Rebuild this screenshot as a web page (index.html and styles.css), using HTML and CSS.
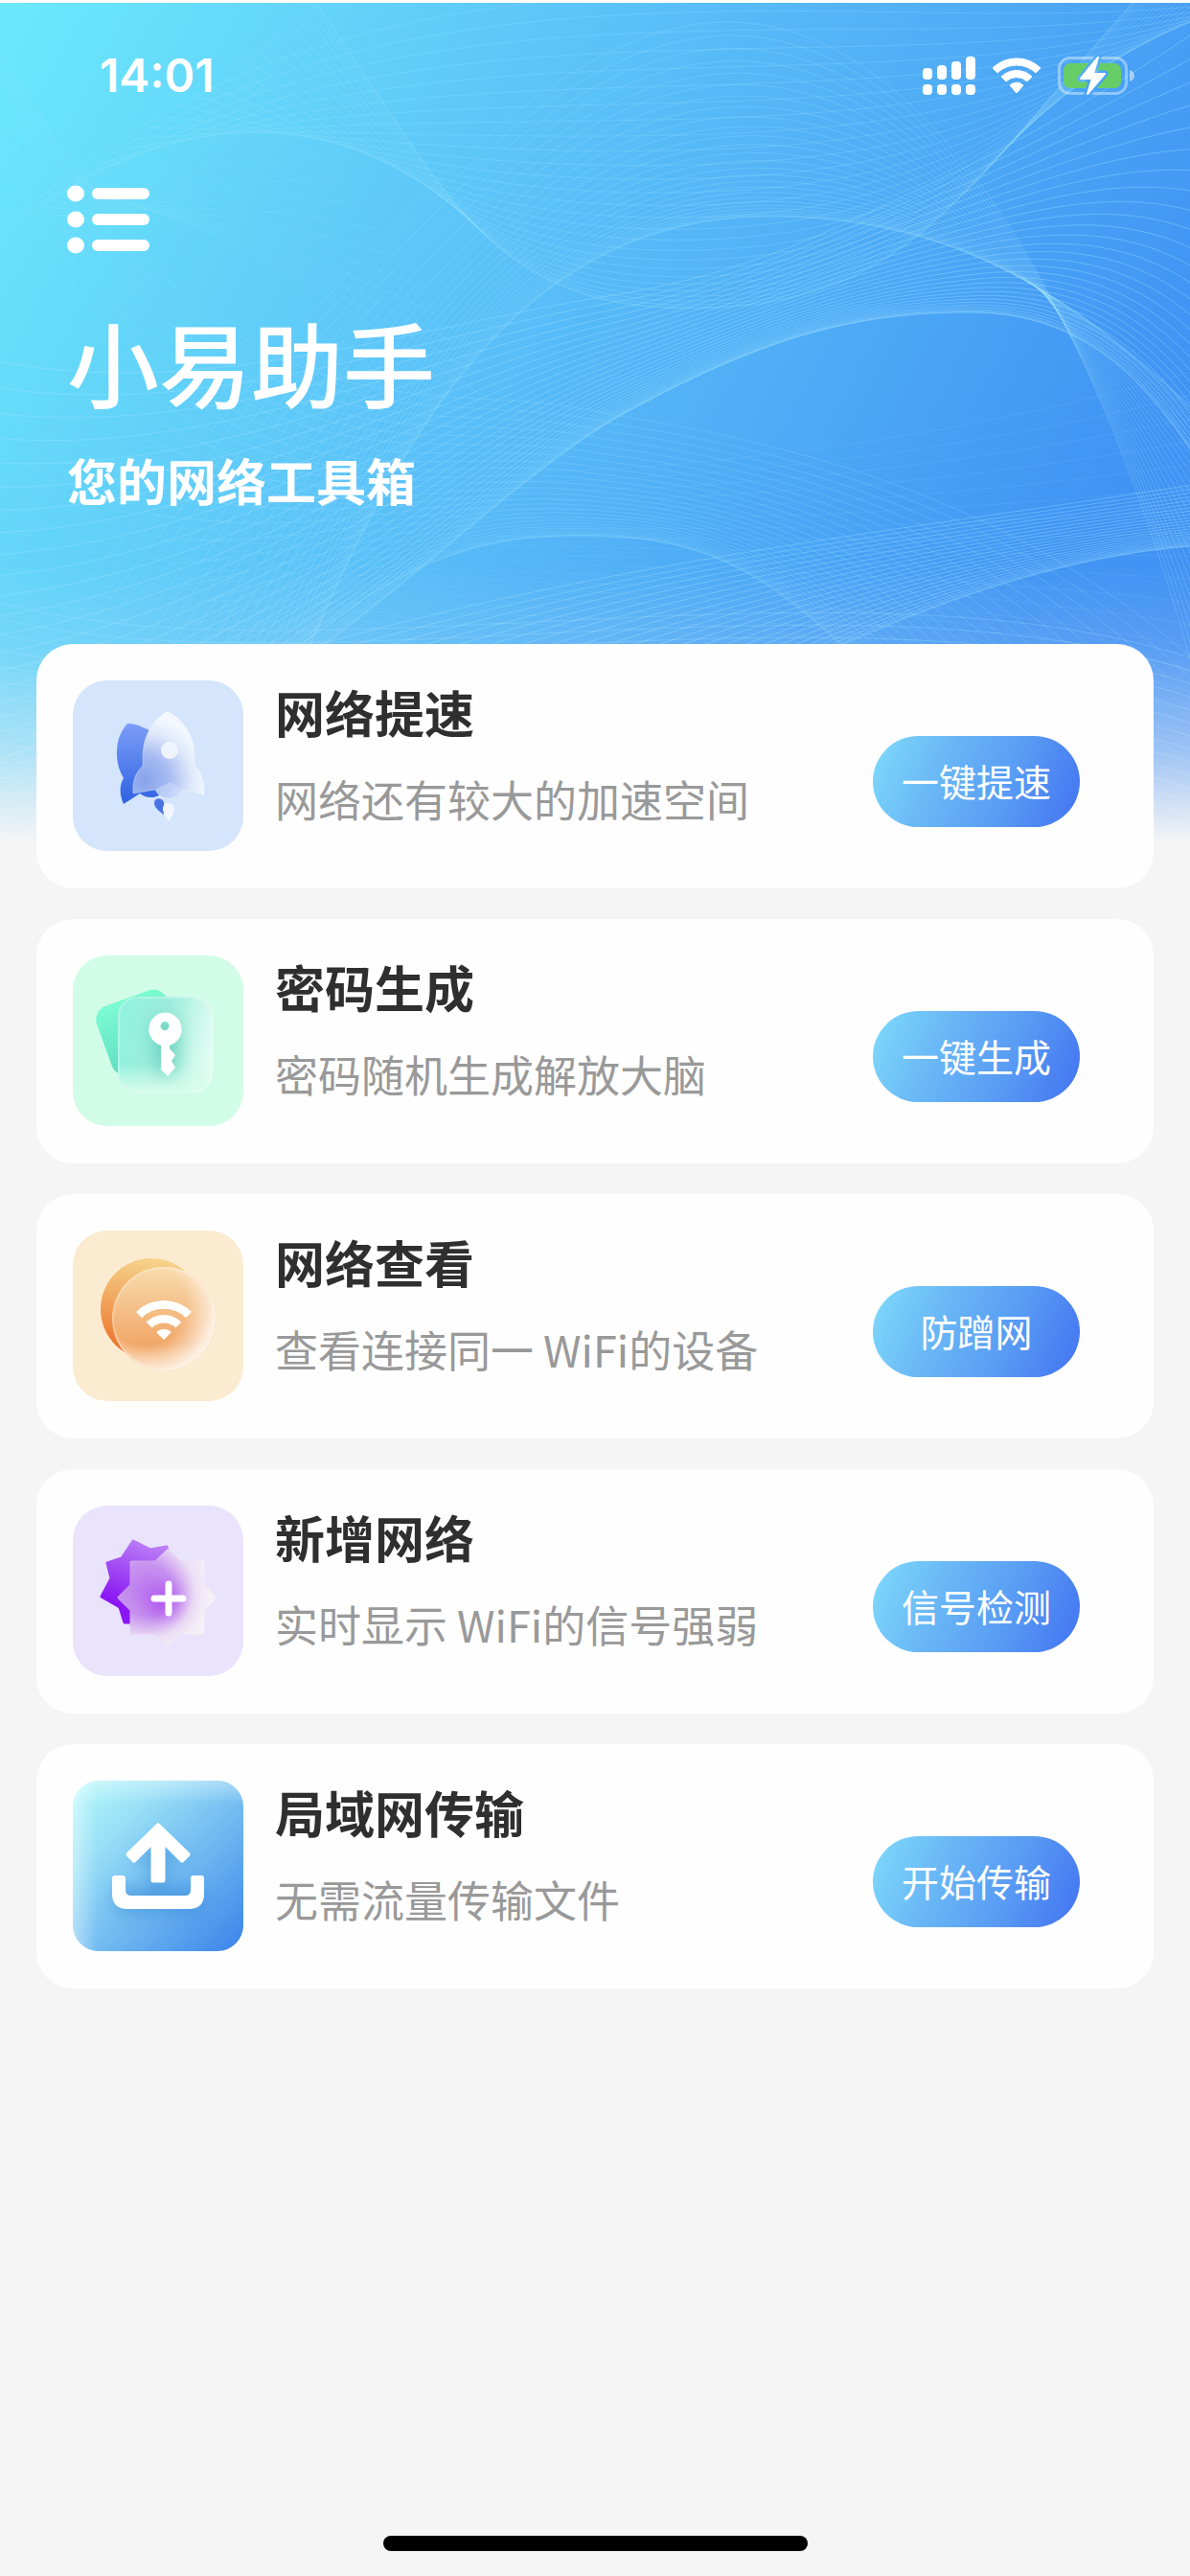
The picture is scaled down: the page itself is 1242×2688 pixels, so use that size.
FILE: index.html
```html
<!DOCTYPE html>
<html lang="zh-CN">
<head>
<meta charset="utf-8">
<meta name="viewport" content="width=device-width, initial-scale=1">
<title>小易助手</title>
<link rel="stylesheet" href="styles.css">
</head>
<body>
<svg class="defs" width="0" height="0" aria-hidden="true">
  <symbol id="wifi" viewBox="66 73 58 41">
    <path d="M66 85a41 41 0 0 1 58 0l-6 6a33 33 0 0 0-46 0zM76.600 95.600a26 26 0 0 1 36.800 0l-6 6a17.500 17.500 0 0 0-24.800 0zM87.200 106.200a11 11 0 0 1 15.600 0L95 114z" fill="#fff"/>
  </symbol>
</svg>
<div class="page">
  <div class="backdrop" aria-hidden="true">
    <svg id="waves" class="waves" viewBox="0 0 1242 885" preserveAspectRatio="none"></svg>
  </div>

  <header class="hero">
    <div class="status">
      <time class="clock">14:01</time>
      <div class="status-icons">
        <svg width="55" height="40" viewBox="0 0 55 40" fill="#fff" aria-hidden="true">
          <rect x="0" y="12" width="10" height="12" rx="4"/><rect x="15" y="9" width="10" height="15" rx="4"/><rect x="30" y="5" width="10" height="19" rx="4"/><rect x="45" y="0" width="10" height="24" rx="4"/>
          <rect x="0" y="29" width="10" height="11" rx="4"/><rect x="15" y="29" width="10" height="11" rx="4"/><rect x="30" y="29" width="10" height="11" rx="4"/><rect x="45" y="29" width="10" height="11" rx="4"/>
        </svg>
        <svg width="52" height="38" viewBox="0 0 52 38" fill="#fff" stroke="#fff" stroke-width="1" stroke-linejoin="round" aria-hidden="true">
          <path d="M1 11a36 36 0 0 1 50 0l-5 5a29 29 0 0 0-40 0zM10 20a23 23 0 0 1 32 0l-5 5a16 16 0 0 0-22 0zM19 29a10 10 0 0 1 14 0l-7 8z"/>
        </svg>
        <svg width="80" height="40" viewBox="0 0 80 40" aria-hidden="true">
          <mask id="bolt-gap"><rect width="80" height="40" fill="#fff"/><path d="M42 1L24 23h12l-5 16L49 18H37z" fill="#000" stroke="#000" stroke-width="7" stroke-linejoin="round"/></mask>
          <g mask="url(#bolt-gap)">
            <rect x="1.500" y="1.500" width="70" height="37" rx="11" fill="none" stroke="#fff" stroke-opacity=".4" stroke-width="3"/>
            <rect x="6" y="7" width="60" height="26" rx="7" fill="#67ce67"/>
          </g>
          <path d="M75 14q5 2 5 6t-5 6z" fill="#fff" fill-opacity=".5"/>
          <path d="M42 1L24 23h12l-5 16L49 18H37z" fill="#fff" stroke="#fff" stroke-width="2" stroke-linejoin="round"/>
        </svg>
      </div>
    </div>
    <div class="intro">
      <button class="menu" type="button" aria-label="菜单">
        <svg width="86" height="72" viewBox="0 0 86 72" fill="#fff" aria-hidden="true">
          <ellipse cx="9" cy="9" rx="9" ry="8.500"/><ellipse cx="9" cy="36" rx="9" ry="8.500"/><ellipse cx="9" cy="63" rx="9" ry="8.500"/>
          <rect x="26" y="3" width="60" height="12" rx="6"/><rect x="26" y="30" width="60" height="12" rx="6"/><rect x="26" y="57" width="60" height="12" rx="6"/>
        </svg>
      </button>
      <h1>小易助手</h1>
      <p class="tagline">您的网络工具箱</p>
    </div>
  </header>

  <main class="cards">
    <section class="card">
      <svg class="icon" viewBox="0 0 178 178" aria-hidden="true">
        <defs>
          <linearGradient id="r1" x1="0" y1="0" x2="0" y2="1"><stop offset="0" stop-color="#7c9df7"/><stop offset="1" stop-color="#2f62e2"/></linearGradient>
          <radialGradient id="r2" gradientUnits="userSpaceOnUse" cx="74" cy="104" r="66"><stop offset="0" stop-color="#88a3ec"/><stop offset=".4" stop-color="#a6bbf1"/><stop offset=".75" stop-color="#dfe8fb"/><stop offset="1" stop-color="#f3f8fe"/></radialGradient>
        </defs>
        <rect width="178" height="178" rx="36" fill="#d4e5fc"/>
        <path d="M57 45C49 54 46 64 46 76c0 11 3 19 7 26-4 6-5 16 0 27l17-11c6 5 14 5 20 2V60c-4-6-12-9-17-11-5-3-11-4-16-4z" fill="url(#r1)"/>
        <path d="M99 32C86 40 73 55 73 80v9c-7 7-11 15-10 29l23-4c3 6 8 9 14 9s12-3 15-9l22 5c0-15-3-23-10-30v-9C127 55 113 40 99 32z" fill="url(#r2)" stroke="#fff" stroke-opacity=".3"/>
        <path d="M86 114c3 6 8 9 14 9s12-3 15-9l-14-8z" fill="#d4e5fc" fill-opacity=".45"/>
        <circle cx="101" cy="73" r="9" fill="#f0f4fd"/>
        <path d="M95 140c-6-4-10-8-10-12 0-6 8-6 10-1z" fill="#4a73e4"/>
        <path d="M100 147c-3-5-6-9-6-13 0-8 12-8 12 0 0 5-3 9-6 13z" fill="#f0f5fe"/>
      </svg>
      <div class="info"><h2>网络提速</h2><p>网络还有较大的加速空间</p></div>
      <button class="action" type="button">一键提速</button>
    </section>

    <section class="card">
      <svg class="icon" viewBox="0 0 178 178" aria-hidden="true">
        <defs>
          <linearGradient id="k1" x1="0" y1="0" x2="0" y2="1"><stop offset="0" stop-color="#7dfbd2"/><stop offset="1" stop-color="#5fdcc0"/></linearGradient>
          <linearGradient id="k2" x1="0" y1=".4" x2="1" y2=".6"><stop offset="0" stop-color="#93f3de"/><stop offset=".45" stop-color="#9cebdc"/><stop offset=".75" stop-color="#c5f7e8"/><stop offset="1" stop-color="#e3fdf3"/></linearGradient>
          <linearGradient id="k3" x1="0" y1="0" x2="0" y2="1"><stop offset=".7" stop-color="#d6fcec" stop-opacity="0"/><stop offset=".95" stop-color="#d6fcec" stop-opacity=".9"/></linearGradient>
          <filter id="soft" x="-50%" y="-50%" width="200%" height="200%"><feGaussianBlur stdDeviation="9"/></filter>
        </defs>
        <rect width="178" height="178" rx="36" fill="#d1fde8"/>
        <rect width="78" height="76" rx="15" transform="translate(20 58) rotate(-20)" fill="url(#k1)"/>
        <rect x="47" y="43" width="99" height="100" rx="20" fill="url(#k2)"/>
        <rect x="47" y="43" width="99" height="100" rx="20" fill="url(#k3)"/>
        <path d="M82 68h28v46l-10 16-12-16z" fill="#4fc4b0" opacity=".65" filter="url(#soft)"/>
        <rect x="48" y="44" width="97" height="98" rx="19" fill="none" stroke="#fff" stroke-opacity=".25" stroke-width="2"/>
        <path fill-rule="evenodd" d="M96 59.500a17.500 17.500 0 0 1 5 34.300V97l6 7-4 6 4 7-8 9-7-7V93.800a17.500 17.500 0 0 1 4-34.300zm0 9.500a4.500 4.500 0 1 0 .1 0z" fill="#fff"/>
      </svg>
      <div class="info"><h2>密码生成</h2><p>密码随机生成解放大脑</p></div>
      <button class="action" type="button">一键生成</button>
    </section>

    <section class="card">
      <svg class="icon" viewBox="0 0 178 178" aria-hidden="true">
        <defs>
          <linearGradient id="w1" x1=".4" y1="0" x2=".3" y2="1"><stop offset="0" stop-color="#f6d38c"/><stop offset=".9" stop-color="#ec732a"/></linearGradient>
          <linearGradient id="w2" x1="0" y1="0" x2="0" y2="1"><stop offset="0" stop-color="#f8dcae"/><stop offset=".75" stop-color="#f1a768"/><stop offset="1" stop-color="#f6c192"/></linearGradient>
          <radialGradient id="w3" gradientUnits="userSpaceOnUse" cx="76" cy="78" r="76"><stop offset=".55" stop-color="#fdf0e0" stop-opacity="0"/><stop offset=".95" stop-color="#fdf1e4" stop-opacity=".95"/></radialGradient>
        </defs>
        <rect width="178" height="178" rx="36" fill="#fbebd0"/>
        <circle cx="82" cy="82" r="53" fill="url(#w1)"/>
        <circle cx="95" cy="92" r="54" fill="url(#w2)"/>
        <circle cx="95" cy="92" r="54" fill="url(#w3)"/>
        <circle cx="95" cy="92" r="53" fill="none" stroke="#fff" stroke-opacity=".25" stroke-width="2"/>
        <use href="#wifi" x="66" y="73" width="58" height="41"/>
      </svg>
      <div class="info"><h2>网络查看</h2><p>查看连接同一 WiFi的设备</p></div>
      <button class="action" type="button">防蹭网</button>
    </section>

    <section class="card">
      <svg class="icon" viewBox="0 0 178 178" aria-hidden="true">
        <defs>
          <linearGradient id="s1" x1=".6" y1="0" x2=".3" y2="1"><stop offset="0" stop-color="#b97df5"/><stop offset=".8" stop-color="#8a17f3"/></linearGradient>
          <radialGradient id="s2" gradientUnits="userSpaceOnUse" cx="76" cy="88" r="68"><stop offset="0" stop-color="#bd7df0"/><stop offset=".4" stop-color="#c692ee"/><stop offset=".75" stop-color="#ecdff5"/><stop offset="1" stop-color="#f5f0f7"/></radialGradient>
        </defs>
        <rect width="178" height="178" rx="36" fill="#eae3fc"/>
        <path d="M63 37l18 9 17-3 3 20-39 59-8 0-5-16-19-11 10-19-4-16 15-5z" fill="url(#s1)" stroke="url(#s1)" stroke-width="3" stroke-linejoin="round"/>
        <path d="M99 47l13 12h24v24l12 13-12 13v24h-24l-13 13-13-13H61v-24L48 96l13-13V59h25z" fill="url(#s2)" stroke="url(#s2)" stroke-width="3" stroke-linejoin="round"/>
        <circle cx="96" cy="100" r="18" fill="#a638ee" opacity=".6" filter="url(#soft)"/>
        <path d="M100 82v30M85 97h30" stroke="#fff" stroke-width="7" stroke-linecap="round"/>
      </svg>
      <div class="info"><h2>新增网络</h2><p>实时显示 WiFi的信号强弱</p></div>
      <button class="action" type="button">信号检测</button>
    </section>

    <section class="card">
      <svg class="icon" viewBox="0 0 178 178" aria-hidden="true">
        <defs>
          <linearGradient id="u1" x1="0" y1="0" x2="1" y2="1"><stop offset="0" stop-color="#b5f9fa"/><stop offset=".25" stop-color="#9be2f7"/><stop offset=".65" stop-color="#67b1f0"/><stop offset="1" stop-color="#3a83ea"/></linearGradient>
          <linearGradient id="u2" x1="0" y1="0" x2="1" y2="0"><stop offset="0" stop-color="#fff" stop-opacity=".4"/><stop offset=".14" stop-color="#fff" stop-opacity="0"/></linearGradient>
          <linearGradient id="u3" x1="0" y1="0" x2="0" y2="1"><stop offset="0" stop-color="#fff" stop-opacity=".35"/><stop offset=".14" stop-color="#fff" stop-opacity="0"/></linearGradient>
        </defs>
        <rect width="178" height="178" rx="27" fill="url(#u1)"/>
        <rect width="178" height="178" rx="27" fill="url(#u2)"/>
        <rect width="178" height="178" rx="27" fill="url(#u3)"/>
        <path d="M89 60l28 26H96v26H82V86H60zM44 112h90v26H44z" fill="#2e82d0" opacity=".5" filter="url(#soft)"/>
        <path d="M89 47l31 30-6 6-20-20v41H84V63L64 83l-6-6z" fill="#fff" stroke="#fff" stroke-width="5" stroke-linejoin="round"/>
        <path d="M41 102q0-3 3-3h8q3 0 3 3v12q0 6 6 6h56q6 0 6-6v-12q0-3 3-3h8q3 0 3 3v16q0 16-16 16H57q-16 0-16-16z" fill="#fff"/>
      </svg>
      <div class="info"><h2>局域网传输</h2><p>无需流量传输文件</p></div>
      <button class="action" type="button">开始传输</button>
    </section>
  </main>

  <div class="home-bar"></div>
</div>
<script src="waves.js"></script>
</body>
</html>
```

FILE: styles.css
```css
* { box-sizing: border-box; }

body {
  margin: 0;
  background: #f5f5f5;
  color: #2f2f2f;
  font-family: "Noto Sans CJK SC", "Noto Sans", sans-serif;
}

h1, h2, p { margin: 0; }

button {
  padding: 0;
  border: 0;
  background: none;
  font: inherit;
  color: inherit;
  cursor: pointer;
}

svg { display: block; }

.defs { position: absolute; }

.page {
  position: relative;
  display: flex;
  flex-direction: column;
  min-height: 100vh;
  border-top: 3px solid #fff;
}

/* Blue hero artwork that fades into the page behind the first card */
.backdrop {
  position: absolute;
  inset: 0 0 auto;
  height: 885px;
  overflow: hidden;
  background: linear-gradient(118deg, #6be9fc 0%, #64d6f9 18%, #5cc4f9 36%, #4facf6 60%, #4295f4 82%, #418ef4 100%);
}

.backdrop::after {
  content: "";
  position: absolute;
  inset: 0;
  background: linear-gradient(to bottom, rgba(245, 245, 245, 0) 66%, rgba(245, 245, 245, .12) 76%, rgba(245, 245, 245, .5) 88%, #f5f5f5 99%);
}

.waves {
  width: 100%;
  height: 100%;
  fill: none;
  stroke: #a4e4fb;
  stroke-width: 1;
}

.hero { position: relative; color: #fff; }

.status {
  display: flex;
  align-items: center;
  justify-content: space-between;
  height: 152px;
  padding: 0 58px 0 104px;
}

.clock {
  font: 600 48px/56px Inter, "Noto Sans", sans-serif;
}

.status-icons {
  display: flex;
  align-items: center;
  gap: 17px;
}

.intro { padding: 38px 70px 0; }

.menu { display: block; }

h1 {
  margin-top: 62px;
  font-size: 96px;
  font-weight: 500;
  line-height: 100px;
}

.tagline {
  margin-top: 44px;
  font-size: 52px;
  font-weight: 700;
  line-height: 60px;
}

.cards {
  position: relative;
  display: flex;
  flex-direction: column;
  gap: 32px;
  padding: 141px 38px 40px;
}

.card {
  display: flex;
  align-items: flex-start;
  min-height: 255px;
  padding: 38px 77px 38px 38px;
  border-radius: 38px;
  background: #fefefe;
}

.icon { flex: none; width: 178px; height: 178px; }

.info { flex: 1; min-width: 0; padding-left: 33px; }

h2 {
  font-size: 52px;
  font-weight: 700;
  line-height: 66px;
}

.info p {
  margin-top: 28px;
  font-size: 45px;
  line-height: 60px;
  color: #999;
}

.action {
  flex: none;
  width: 216px;
  height: 95px;
  margin-top: 58px;
  padding-bottom: 3px;
  border-radius: 48px;
  background: linear-gradient(112deg, #7fdbfb 0%, #6bbaf6 30%, #5a9ef4 62%, #4273f1 100%);
  color: #fff;
  font-size: 39px;
  line-height: 60px;
}

.home-bar {
  align-self: center;
  width: 443px;
  max-width: 60%;
  height: 16px;
  margin: auto 0 26px;
  border-radius: 8px;
  background: #000;
}
```

FILE: waves.js
```js
// Each family blends line by line from one curve to another.
const families = [
  { from: 'M -20 860 C 300 760 480 530 640 435 C 800 345 900 323 1011 323 C 1110 323 1190 370 1262 500',
    to: 'M -20 370 C 200 420 420 340 640 305 C 800 280 900 220 1011 170 C 1110 120 1190 70 1262 20',
    lines: 30, ease: 1.7, opacity: 0.36 },
  { from: 'M 320 680 C 430 420 560 223 803 223 C 980 223 1110 290 1262 440',
    to: 'M 60 640 C 360 280 560 20 760 20 C 980 20 1160 350 1262 760',
    lines: 28, ease: 1.9, opacity: 0.24 },
  { from: 'M 330 0 C 460 180 500 319 718 319 C 950 319 1000 200 1200 -20',
    to: 'M -20 260 C 160 80 380 0 700 -10 C 950 -20 1200 20 1400 -20',
    lines: 28, ease: 1.7, opacity: 0.24 },
  { from: 'M 230 740 C 400 590 480 556 604 556 C 740 556 800 590 930 720',
    to: 'M -20 20 C 240 500 440 380 640 430 C 900 470 1100 550 1262 700',
    lines: 28, ease: 1.9, opacity: 0.22 },
  { from: 'M 640 790 C 840 680 1060 575 1262 566',
    to: 'M -20 800 C 400 600 900 560 1262 500',
    lines: 24, ease: 1.5, opacity: 0.35 },
  { from: 'M -20 420 C 200 500 700 540 1262 380',
    to: 'M -20 640 C 400 660 900 600 1262 800',
    lines: 18, ease: 1, opacity: 0.1 },
  { from: 'M -20 620 C 300 720 900 560 1262 690',
    to: 'M -20 860 C 300 840 900 760 1262 880',
    lines: 15, ease: 1, opacity: 0.28 },
  { from: 'M -20 20 C 60 140 90 205 124 205 C 160 205 190 130 270 60',
    to: 'M -20 260 C 40 240 80 230 150 215 C 240 240 300 280 520 420',
    lines: 16, ease: 1.4, opacity: 0.15 },
];

const blend = (a, b, t) => {
  const target = b.split(' ');
  return a.split(' ').map((part, i) =>
    isNaN(part) ? part : (Number(part) + (Number(target[i]) - Number(part)) * t).toFixed(1)
  ).join(' ');
};

const svg = document.getElementById('waves');
for (const family of families) {
  for (let i = 0; i < family.lines; i++) {
    const path = document.createElementNS('http://www.w3.org/2000/svg', 'path');
    path.setAttribute('d', blend(family.from, family.to, (i / (family.lines - 1)) ** family.ease));
    path.setAttribute('stroke-opacity', family.opacity);
    svg.appendChild(path);
  }
}
```
